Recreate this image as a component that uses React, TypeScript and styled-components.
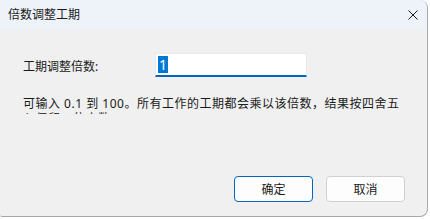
import React from "react";
import styled, { createGlobalStyle } from "styled-components";

const Global = createGlobalStyle`
  html, body { margin: 0; padding: 0; background: #ffffff; }
  body { font-family: "Segoe UI", "Noto Sans CJK SC", "Noto Sans", sans-serif; }
`;

const font = `"Noto Sans", "Noto Sans CJK SC", sans-serif`;

const Window = styled.div`
  width: 427px;
  height: 216px;
  display: flex;
  flex-direction: column;
  background: #f0f0f0;
  border-right: 1px solid #a8a8a8;
  border-bottom: 1px solid #a8a8a8;
  border-radius: 2px 8px 8px 2px;
  overflow: hidden;
  font-family: ${font};
  color: #1a1a1a;
`;

const TitleBar = styled.div`
  height: 29px;
  flex: none;
  display: flex;
  align-items: center;
  justify-content: space-between;
  padding: 0 0 0 8px;
  background: #eef2f9;
`;

const Title = styled.span`
  font-size: 12px;
  line-height: 16px;
  color: #1a1a1a;
`;

const CloseButton = styled.div`
  width: 32px;
  height: 29px;
  display: flex;
  align-items: center;
  justify-content: center;
  margin-right: -2px;
`;

const Body = styled.div`
  flex: 1;
  display: flex;
  flex-direction: column;
  padding: 24px 22px 14px 23px;
`;

const FieldRow = styled.div`
  display: flex;
  align-items: center;
  height: 23px;
`;

const Label = styled.span`
  width: 132px;
  font-size: 12px;
  line-height: 16px;
  margin-top: 4px;
`;

const InputBox = styled.div`
  width: 148px;
  height: 21px;
  background: #ffffff;
  border: 1px solid #e6e9ee;
  border-bottom: 2px solid #0067c0;
  border-radius: 1px;
  display: flex;
  align-items: center;
  padding-left: 2px;
  margin-top: 1px;
`;

const Selected = styled.span`
  background: #0078d7;
  color: #ffffff;
  font-family: "Segoe UI", "Noto Sans", sans-serif;
  font-size: 14px;
  line-height: 17px;
  height: 17px;
  padding: 0 1px;
`;

const Hint = styled.p`
  margin: 20px 0 0 0;
  font-size: 12px;
  letter-spacing: 0.5px;
  line-height: 15px;
  height: 18px;
  overflow: hidden;
  width: 383px;
`;

const Footer = styled.div`
  margin-top: auto;
  display: flex;
  justify-content: flex-end;
  gap: 13px;
`;

const Button = styled.button<{ $primary?: boolean }>`
  width: 79px;
  height: 26px;
  box-sizing: border-box;
  border-radius: 4px;
  border: 1px solid ${(p) => (p.$primary ? "#0067c0" : "#d0d0d0")};
  background: #fdfdfd;
  font-family: ${font};
  font-size: 12px;
  color: #1a1a1a;
  padding: 0;
  display: flex;
  align-items: center;
  justify-content: center;
`;

export default function App() {
  return (
    <>
      <Global />
      <Window>
        <TitleBar>
          <Title>倍数调整工期</Title>
          <CloseButton>
            <svg width="10" height="10" viewBox="0 0 10 10">
              <path d="M0.5 0.5 L9.5 9.5 M9.5 0.5 L0.5 9.5" stroke="#1a1a1a" strokeWidth="1" />
            </svg>
          </CloseButton>
        </TitleBar>
        <Body>
          <FieldRow>
            <Label>工期调整倍数:</Label>
            <InputBox>
              <Selected>1</Selected>
            </InputBox>
          </FieldRow>
          <Hint>
            可输入 0.1 到 100。所有工作的工期都会乘以该倍数，结果按四舍五入保留一位小数。
          </Hint>
          <Footer>
            <Button $primary>确定</Button>
            <Button>取消</Button>
          </Footer>
        </Body>
      </Window>
    </>
  );
}
